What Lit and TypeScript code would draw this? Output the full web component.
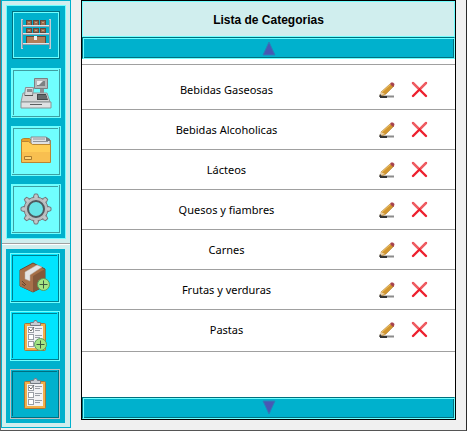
import { LitElement, html, css, svg } from "lit";
import { customElement } from "lit/decorators.js";

const boards = svg`
  <rect x="1" y="0" width="2" height="30" fill="#c3ccd4"/><rect x="29" y="0" width="2" height="30" fill="#c3ccd4"/>
  <rect x="2" y="1" width="1" height="28" fill="#8b9aa6"/><rect x="29" y="1" width="1" height="28" fill="#8b9aa6"/>
  <g fill="#9c6b4c" stroke="#5d4a40">
    <rect x="6.500" y="1.500" width="5" height="5"/><rect x="13.500" y="1.500" width="5" height="5"/><rect x="20.500" y="1.500" width="5" height="5"/>
    <rect x="6.500" y="9.500" width="5" height="4"/><rect x="13.500" y="9.500" width="5" height="4"/><rect x="20.500" y="9.500" width="5" height="4"/>
    <rect x="6.500" y="17.500" width="19" height="7" fill="#b17d58"/>
  </g>
  <path d="M8 3.500h2M15 3.500h2M22 3.500h2M8 11.500h2M15 11.500h2M22 11.500h2" stroke="#c79f82"/>
  <rect x="14" y="17" width="3" height="4" fill="#eee"/>
  <path d="M3 6.500h26M3 14.500h26M3 24.500h26" stroke="#e0e4e8"/>
  <path d="M3 7.500h26M3 15.500h26M3 25.500h26" stroke="#93a3ad"/>`;

const register = svg`
  <path d="M14.500 1.500h13v10h-13z" fill="#b4b7b9" stroke="#7b8082"/><path d="M17 4h8v5h-8z" fill="#7c8082"/><path d="M17 4h6l-4 4h-2z" fill="#e9ebed"/>
  <path d="M20 12h4v4h-4z" fill="#8b8f94"/>
  <path d="M3 16h24l3 9H1z" fill="#d3d5d6" stroke="#92989a"/>
  <path d="M5.500 10.500h8l-1 8h-8z" fill="#d7d9db" stroke="#8b8f94"/><path d="M7 12h5v3H7z" fill="#8b8d8f"/><path d="M5 18.500h8" stroke="#555"/>
  <path d="M17 17h9l2 6H17z" fill="#44484b"/><path d="M18 19h8M18 21h9" stroke="#888d90"/>
  <path d="M1 25h30v6H1z" fill="#dfe1e3" stroke="#8b9193"/><path d="M10 27.500h12" stroke="#5a5e60"/>`;

const folder = svg`
  <path d="M1.500 4.500l2-1h6l2 2h19v20h-29z" fill="#e9a126" stroke="#b0802f"/>
  <path d="M11 2h15l4 3v5H11z" fill="#dfe1e4" stroke="#85898c"/><path d="M13 4h12M13 6.500h15" stroke="#92959b"/><path d="M26 2v4h4V4z" fill="#75797f"/>
  <path d="M1.500 6.500h7l4 3h18v18h-29z" fill="#ffcd56" stroke="#b98532"/><path d="M2 17h28v10H2z" fill="#f8bf50"/><path d="M4.500 21.500h7v3h-7z" fill="#ffd477" stroke="#a97a2d"/>`;

const teeth = [0, 45, 90, 135, 180, 225, 270, 315];
const gear = svg`
  <g fill="#c3c6c8" stroke="#70777c">${teeth.map((a) => svg`<path d="M13 5l1.500-4h3L19 5z" transform="rotate(${a} 16 16)"/>`)}</g>
  <circle cx="16" cy="16" r="12" fill="#b9bdbf" stroke="#777e82"/>
  ${teeth.map((a) => svg`<path d="M14 5.500l1-3h2l1 3z" fill="#c3c6c8" transform="rotate(${a} 16 16)"/>`)}
  <circle cx="16" cy="16" r="8" fill="#68e4e6" stroke="#4f5a5e" stroke-width="2"/>`;

const plus = (x: number, y: number) => svg`
  <circle cx=${x} cy=${y} r="6" fill="#a5e583" stroke="#5a9c60"/>
  <path d="M${x - 4} ${y}h8M${x} ${y - 4}v8" stroke="#3d5a42"/>`;

const box = svg`
  <path d="M1 8L14 1l12 6v17l-12 6L1 24z" fill="#a76f46" stroke="#6b4832"/>
  <path d="M1 8l13 6v16L1 24z" fill="#a8714b"/><path d="M14 14l12-7v17l-12 6z" fill="#85593b"/>
  <path d="M6 10L18 3l5 2-12 8v6l-5-2z" fill="#e4e3e3" stroke="#b9b2aa" stroke-width=".5"/>
  <path d="M3 19l4 4M3 22l3 2" stroke="#66442e"/>
  ${plus(24.5, 22.5)}`;

const clipboard = svg`
  <rect x="5.500" y="3.500" width="21" height="27" rx="1" fill="#f2b04c" stroke="#a5763a"/>
  <path d="M8 6h16v22H8z" fill="#f2f2f5"/><path d="M11.500 5.500v-3h3l1-2h2l1 2h3v3z" fill="#c9ccd3" stroke="#747a84"/>
  <g fill="#fff" stroke="#9a9ea6"><rect x="9.500" y="7.500" width="5" height="5"/><rect x="9.500" y="14.500" width="5" height="5"/><rect x="9.500" y="21.500" width="5" height="5"/></g>
  <path d="M10 9l2 2 3-4" fill="none" stroke="#666"/>
  <path d="M16 8.500h7M16 10.500h5M16 15.500h7M16 17.500h5M16 22.500h7M16 24.500h5" stroke="#9a9ea6"/>`;

const clipboardPlus = svg`${clipboard}${plus(21.5, 24.5)}`;

const pencil = svg`
  <path d="M3 14.500h12" stroke="#8b8b8b" stroke-width="2"/><path d="M1 15h7" stroke="#333" stroke-width="2"/>
  <path d="M2 10l9-8 4 2-8 8-4 2z" fill="#d2962f" stroke="#a5742a" stroke-width=".5"/><path d="M3 10l9-8" stroke="#efc56d"/>
  <path d="M0 14l2-4 4 2z" fill="#e8d0a8"/><path d="M0 15l1-3 2 2z" fill="#333"/><path d="M11 2l1-1.500h2l1.500 1.500-.5 2-1 1z" fill="#a8444e"/>`;

const cross = svg`
  <g stroke="#ed1f2c" stroke-width="2.400" stroke-linecap="round"><path d="M2 2l13 13"/><path d="M15 2L2 15"/></g>
  <path d="M2 2l5 5M15 2l-5 5" stroke="#ee6065" stroke-width="2" stroke-linecap="round"/>`;

const categories = ["Bebidas Gaseosas", "Bebidas Alcoholicas", "Lácteos", "Quesos y fiambres", "Carnes", "Frutas y verduras", "Pastas"];

@customElement("app-root")
export class AppRoot extends LitElement {
  static styles = css`
    :host { display: flex; min-height: 100vh; background: #f0f0f0; border-left: 1px solid #6e6e6e; border-right: 1px solid #2a2a2a; border-bottom: 1px solid #555; }
    *, :host { box-sizing: border-box; }
    .layout { flex: 1; display: flex; gap: 10px; padding-bottom: 2px; }
    nav { flex: none; width: 70px; border: 1px solid #00b1cd; background: #d0eeee; }
    .group { display: flex; flex-direction: column; gap: 8px; background: #00b1cd; margin: 4px; padding: 4px; border: 1px solid #70ffff; }
    .lower { border-color: #00b1cd; margin: 4px 5px 4px 4px; padding: 3px; }
    .rule { border: 0; margin: 0; height: 2px; background: #fff; border-top: 1px solid #a0a0a0; }
    button { padding: 0; margin: 0; cursor: pointer; }
    .tool { --face: #70ffff; --edge: #70ffff; --shade: #3f9ea1; width: 50px; height: 50px; display: grid; place-items: center; background: var(--face); border: 1px solid var(--edge); box-shadow: inset -1px -1px var(--shade), inset 1px 1px var(--face), inset -2px -2px var(--face), inset 2px 2px var(--shade); }
    .lower .tool { --face: #00e5ff; --shade: #007f91; }
    .lower .tool.on { --face: #00b1cd; --edge: #c0c0c0; --shade: #006f80; }
    .tool.flat { --face: #00b1cd; --edge: #00b1cd; box-shadow: inset 0 0 0 1px #006f80, inset 0 0 0 2px #70ffff; }
    svg { display: block; }
    .panel { flex: 1; margin: 0 10px 8px 0; border: 1px solid #000; background: #fff; display: flex; flex-direction: column; }
    h1 { margin: 0; border: 1px solid #70ffff; background: #d0eeee; color: #000; text-align: center; font: bold 12px/36px "Liberation Sans", Arial, sans-serif; height: 36px; }
    .scroll { flex: none; height: 22px; background: #00b1cd; border: 1px solid; border-color: #00707f #70ffff #70ffff #00707f; box-shadow: inset 1px 1px #70ffff, inset -1px -1px #00707f; display: grid; place-items: center; }
    .rows { flex: 1; padding-top: 5px; }
    table { width: 100%; table-layout: fixed; border-spacing: 0; color: #000; font: 11px/16px "Noto Sans", "Open Sans", sans-serif; border-top: 1px solid #a0a0a0; }
    td { height: 40px; border-bottom: 1px solid #a0a0a0; text-align: center; padding: 0; }
    tr:first-child td { height: 45px; padding-top: 5px; }
    tr:last-child td { height: 42px; padding-bottom: 2px; }
    .edit { width: 32px; }
    .remove { width: 52px; }
    .icon { display: grid; place-items: center; width: 32px; height: 20px; background: none; border: 0; }
  `;

  tool(label: string, icon: unknown, kind = "") {
    return html`<button class="tool ${kind}" aria-label=${label}><svg width="32" height="32" viewBox="0 0 32 32">${icon}</svg></button>`;
  }

  arrow(label: string, d: string) {
    return html`<button class="scroll" aria-label=${label}><svg width="14" height="16" viewBox="0 0 14 16"><path d=${d} fill="#4858b4" stroke="#2b80b8" /></svg></button>`;
  }

  row(name: string) {
    return html`<tr>
      <td>${name}</td>
      <td class="edit"><button class="icon" aria-label="Editar ${name}"><svg width="16" height="16" viewBox="0 0 16 16">${pencil}</svg></button></td>
      <td class="remove"><button class="icon" aria-label="Eliminar ${name}"><svg width="17" height="17" viewBox="0 0 17 17">${cross}</svg></button></td>
    </tr>`;
  }

  render() {
    return html`<div class="layout">
      <nav>
        <div class="group">${this.tool("Stock", boards, "flat")}${this.tool("Caja", register)}${this.tool("Archivos", folder)}${this.tool("Ajustes", gear)}</div>
        <hr class="rule" />
        <div class="group lower">${this.tool("Nuevo producto", box)}${this.tool("Nueva categoria", clipboardPlus)}${this.tool("Categorias", clipboard, "on")}</div>
      </nav>
      <section class="panel">
        <h1>Lista de Categorias</h1>
        ${this.arrow("Subir", "M7 2L13 15H1z")}
        <div class="rows"><table><tbody>${categories.map((c) => this.row(c))}</tbody></table></div>
        ${this.arrow("Bajar", "M1 1H13L7 14z")}
      </section>
    </div>`;
  }
}
